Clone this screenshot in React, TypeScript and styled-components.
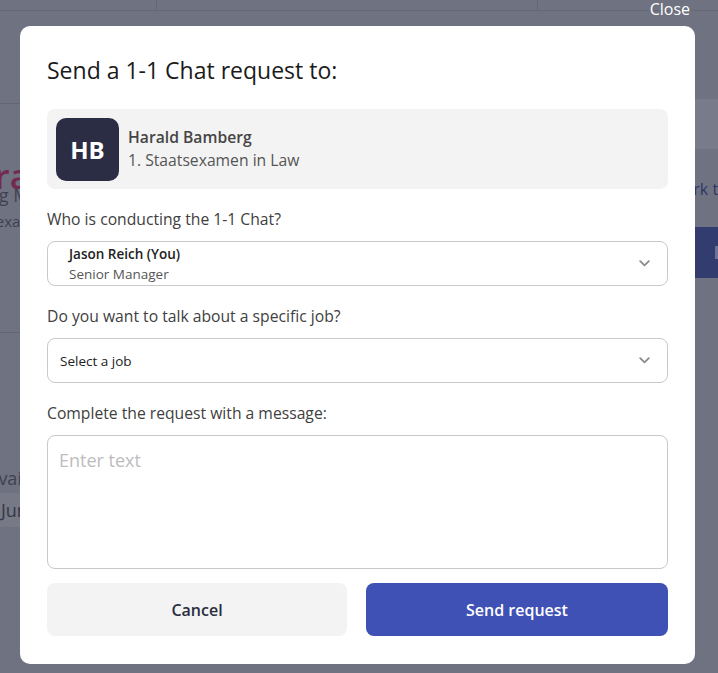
import React from "react";
import styled, { createGlobalStyle } from "styled-components";

const GlobalStyle = createGlobalStyle`
  html, body { margin: 0; padding: 0; }
  body {
    font-family: "Open Sans", "Noto Sans", Arial, sans-serif;
    overflow: hidden;
  }
  * { box-sizing: border-box; }
`;

const Page = styled.div`
  position: relative;
  width: 718px;
  height: 673px;
  background: #6f7280;
  overflow: hidden;
`;

/* ---------- dimmed page behind the dialog ---------- */
const BgTop = styled.div`
  height: 11px;
  display: grid;
  grid-template-columns: 157px 381px 1fr;
  border-bottom: 1px solid #656774;
`;

const BgTopCell = styled.div`
  border-right: 1px solid #656774;
  &:last-child { border-right: none; }
`;

const BgBody = styled.div`
  display: flex;
  justify-content: space-between;
`;

const BgLeft = styled.div`
  width: 300px;
  display: flex;
  flex-direction: column;
`;

const BgRule = styled.div<{ $top: number }>`
  margin-top: ${(p) => p.$top}px;
  height: 1px;
  background: #646673;
`;

const BgHeading = styled.div<{ $shift: number }>`
  margin-top: 59px;
  margin-left: ${(p) => p.$shift}px;
  font-size: 35px;
  font-weight: 600;
  line-height: 26px;
  color: #722a50;
  white-space: nowrap;
`;

const BgLine = styled.div<{ $size: number; $top: number; $shift: number }>`
  margin-top: ${(p) => p.$top}px;
  margin-left: ${(p) => p.$shift}px;
  font-size: ${(p) => p.$size}px;
  line-height: ${(p) => p.$size + 5}px;
  color: #3f4150;
  white-space: nowrap;
`;

const BgChip = styled.div`
  margin-top: 3px;
  width: 90px;
  margin-left: -70px;
  padding: 5px 0 5px 71px;
  background: #777986;
  font-size: 18px;
  line-height: 24px;
  color: #363848;
  white-space: nowrap;
`;

const BgRight = styled.div`
  width: 200px;
  display: flex;
  flex-direction: column;
`;

const BgStrip = styled.div`
  margin-top: 88px;
  height: 50px;
  background: #787b8a;
`;

const BgLink = styled.div`
  margin-top: 29px;
  padding-left: 152px;
  font-size: 16px;
  line-height: 22px;
  color: #2e3666;
  white-space: nowrap;
`;

const BgButton = styled.div`
  margin-top: 27px;
  height: 51px;
  background: #333c6f;
  display: flex;
  align-items: center;
  justify-content: flex-end;
`;

const BgButtonMark = styled.div`
  width: 3px;
  height: 13px;
  background: #6d7296;
`;

/* ---------- overlay + dialog ---------- */
const CloseLink = styled.div`
  position: absolute;
  top: -1px;
  right: 28px;
  font-size: 16px;
  line-height: 20px;
  color: #ffffff;
`;

const Dialog = styled.div`
  position: absolute;
  left: 20px;
  top: 26px;
  width: 675px;
  height: 638px;
  background: #ffffff;
  border-radius: 10px;
  padding: 29px 27px 28px;
  display: flex;
  flex-direction: column;
`;

const Title = styled.h1`
  margin: 0;
  font-size: 23px;
  line-height: 30px;
  font-weight: 400;
  color: #1b1b1b;
`;

const PersonCard = styled.div`
  margin-top: 24px;
  height: 80px;
  background: #f3f3f3;
  border-radius: 8px;
  padding: 9px;
  display: flex;
  align-items: center;
  gap: 9px;
`;

const Avatar = styled.div`
  width: 63px;
  height: 63px;
  border-radius: 10px;
  background: #2b2d45;
  color: #ffffff;
  font-size: 24px;
  font-weight: 700;
  display: flex;
  align-items: center;
  justify-content: center;
  flex-shrink: 0;
`;

const PersonText = styled.div`
  display: flex;
  flex-direction: column;
  font-size: 15.7px;
  line-height: 23px;
`;

const PersonName = styled.div`
  font-weight: 600;
  color: #454545;
`;

const PersonSub = styled.div`
  color: #555555;
`;

const FieldLabel = styled.div<{ $top: number }>`
  margin-top: ${(p) => p.$top}px;
  margin-bottom: 11px;
  font-size: 15.7px;
  line-height: 22px;
  color: #404040;
`;

const SelectBox = styled.div<{ $pad: number }>`
  height: 45px;
  border: 1px solid #c9c9c9;
  border-radius: 8px;
  padding: 0 17px 0 ${(p) => p.$pad}px;
  display: flex;
  align-items: center;
  justify-content: space-between;
`;

const SelectText = styled.div`
  display: flex;
  flex-direction: column;
  font-size: 13.5px;
  line-height: 20px;
  color: #222222;
`;

const SelectMain = styled.div<{ $bold?: boolean }>`
  font-weight: ${(p) => (p.$bold ? 600 : 400)};
  color: #222222;
`;

const SelectSub = styled.div`
  color: #555555;
`;

const Message = styled.div`
  height: 134px;
  border: 1px solid #c9c9c9;
  border-radius: 8px;
  padding: 12px 11px;
  font-size: 18px;
  line-height: 25px;
  color: #bdbdbd;
`;

const Actions = styled.div`
  margin-top: 14px;
  display: grid;
  grid-template-columns: 300px 302px;
  justify-content: space-between;
`;

const Button = styled.div<{ $primary?: boolean }>`
  height: 53px;
  border-radius: 8px;
  display: flex;
  align-items: center;
  justify-content: center;
  font-size: 16px;
  font-weight: 600;
  background: ${(p) => (p.$primary ? "#3f51b5" : "#f3f3f3")};
  color: ${(p) => (p.$primary ? "#ffffff" : "#2a2d40")};
`;

const Chevron = () => (
  <svg width="11" height="7" viewBox="0 0 11 7" fill="none">
    <path d="M1.2 1.2 L5.5 5.3 L9.8 1.2" stroke="#8a8a8a" strokeWidth="1.8" strokeLinecap="round" strokeLinejoin="round" />
  </svg>
);

export default function App() {
  return (
    <>
      <GlobalStyle />
      <Page>
        <BgTop>
          <BgTopCell />
          <BgTopCell />
          <BgTopCell />
        </BgTop>
        <BgBody>
          <BgLeft>
            <BgRule $top={92} />
            <BgHeading $shift={-52}>Harald</BgHeading>
            <BgLine $size={18} $top={-5} $shift={-42}>Hiring Manager</BgLine>
            <BgLine $size={15} $top={4} $shift={-47}>Staatsexamen</BgLine>
            <BgRule $top={101} />
            <BgLine $size={18} $top={134} $shift={-13}>Available</BgLine>
            <BgChip>June</BgChip>
          </BgLeft>
          <BgRight>
            <BgStrip />
            <BgLink>Mark this candidate</BgLink>
            <BgButton>
              <BgButtonMark />
            </BgButton>
          </BgRight>
        </BgBody>

        <CloseLink>Close</CloseLink>
        <Dialog>
          <Title>Send a 1-1 Chat request to:</Title>
          <PersonCard>
            <Avatar>HB</Avatar>
            <PersonText>
              <PersonName>Harald Bamberg</PersonName>
              <PersonSub>1. Staatsexamen in Law</PersonSub>
            </PersonText>
          </PersonCard>

          <FieldLabel $top={19}>Who is conducting the 1-1 Chat?</FieldLabel>
          <SelectBox $pad={21}>
            <SelectText>
              <SelectMain $bold>Jason Reich (You)</SelectMain>
              <SelectSub>Senior Manager</SelectSub>
            </SelectText>
            <Chevron />
          </SelectBox>

          <FieldLabel $top={19}>Do you want to talk about a specific job?</FieldLabel>
          <SelectBox $pad={12}>
            <SelectText>
              <SelectMain>Select a job</SelectMain>
            </SelectText>
            <Chevron />
          </SelectBox>

          <FieldLabel $top={19}>Complete the request with a message:</FieldLabel>
          <Message>Enter text</Message>

          <Actions>
            <Button>Cancel</Button>
            <Button $primary>Send request</Button>
          </Actions>
        </Dialog>
      </Page>
    </>
  );
}
